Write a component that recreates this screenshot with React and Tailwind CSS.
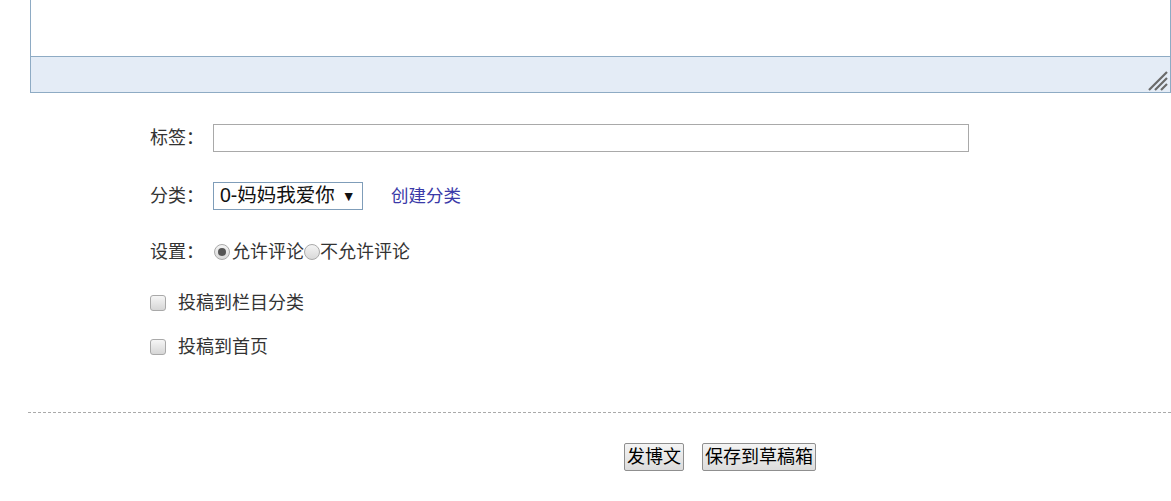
import React, { useState } from "react";

const font = { fontFamily: '"Liberation Sans", "Noto Sans CJK SC", sans-serif' };

const Radio = ({ checked }) => (
  <span className="inline-flex w-[16px] h-[16px] rounded-full border border-[#a9a9a9] bg-gradient-to-b from-[#f4f4f4] to-[#d9d9d9] items-center justify-center shrink-0">
    {checked && <span className="w-[8px] h-[8px] rounded-full bg-[#555]" />}
  </span>
);

const Checkbox = () => (
  <span className="inline-block w-[16px] h-[16px] rounded-[3px] border border-[#a9a9a9] bg-gradient-to-b from-[#f6f6f6] to-[#d6d6d6] shrink-0" />
);

const App = () => {
  const [tags, setTags] = useState("");

  return (
    <div className="w-[1171px] h-[501px] bg-white text-[#333] overflow-hidden" style={font}>
      {/* editor bottom */}
      <div className="ml-[30px] w-[1141px] border-x border-b border-[#8eabc4]">
        <div className="h-[57px] bg-white border-b border-[#8eabc4]" />
        <div className="h-[35px] bg-[#e4ecf6] flex justify-end items-end pr-[2px] pb-[1px]">
          <svg width="22" height="22" viewBox="0 0 22 22">
            <path d="M21 3 L3 21 M21 9 L9 21 M21 15 L15 21" stroke="#6a6a6a" strokeWidth="2.2" />
          </svg>
        </div>
      </div>

      <div className="pl-[150px] pt-[31px] text-[18px]">
        <div className="flex items-center h-[28px]">
          <span className="w-[63px]">标签：</span>
          <input
            value={tags}
            onChange={(e) => setTags(e.target.value)}
            className="w-[756px] h-[28px] border border-[#a9a9a9] outline-none px-1"
          />
        </div>

        <div className="flex items-center h-[28px] mt-[30px]">
          <span className="w-[63px]">分类：</span>
          <div className="w-[150px] h-[28px] border border-[#7f9db9] flex items-center px-[6px] text-[#111] text-[19.5px]">
            <span>0-妈妈我爱你</span>
            <span className="ml-[7px] text-[14px]">▼</span>
          </div>
          <a href="#" className="ml-[28px] text-[#3a3aa8] text-[17.5px]">创建分类</a>
        </div>

        <div className="flex items-center h-[28px] mt-[28px]">
          <span className="w-[64px]">设置：</span>
          <Radio checked />
          <span className="ml-[2px]">允许评论</span>
          <Radio />
          <span>不允许评论</span>
        </div>

        <div className="flex items-center h-[28px] mt-[23px]">
          <Checkbox />
          <span className="ml-[12px]">投稿到栏目分类</span>
        </div>

        <div className="flex items-center h-[28px] mt-[16px]">
          <Checkbox />
          <span className="ml-[12px]">投稿到首页</span>
        </div>
      </div>

      <div className="ml-[28px] mt-[51px] border-t border-dashed border-[#aaa]" />

      <div className="flex gap-[18px] mt-[30px] pl-[624px] text-[18px] text-black">
        <button className="h-[28px] px-[2px] border border-[#8f8f8f] rounded-[2px] bg-gradient-to-b from-[#f4f4f4] to-[#dcdcdc] leading-none">
          发博文
        </button>
        <button className="h-[28px] px-[2px] border border-[#8f8f8f] rounded-[2px] bg-gradient-to-b from-[#f4f4f4] to-[#dcdcdc] leading-none">
          保存到草稿箱
        </button>
      </div>
    </div>
  );
};

export default App;
